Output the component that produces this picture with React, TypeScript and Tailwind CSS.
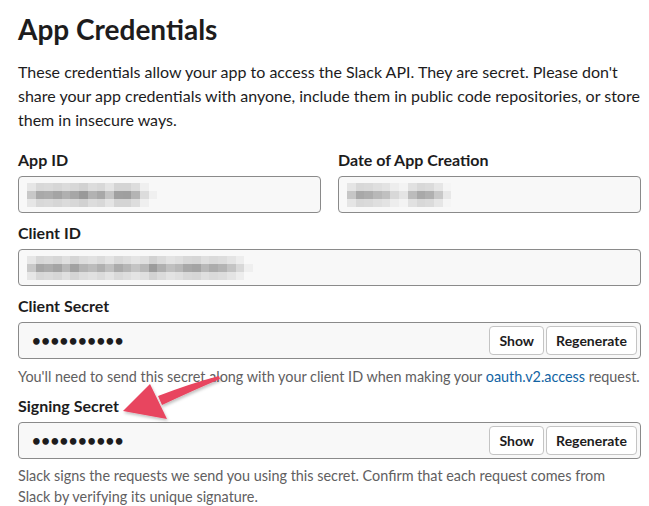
import React from 'react';

// pixelated (redacted) values: 3 rows of cells
const appIdMid = ['#c8c8c8', '#a9a9a9', '#acacac', '#a4a4a4', '#b0b0b0', '#a6a6a6', '#999', '#b2b2b2', '#a8a8a8', '#c4c4c4', '#a0a0a0', '#9f9f9f', '#b4b4b4', '#dcdcdc', '#f0f0f0'];
const dateMid = ['#c6c6c6', '#a8a8a8', '#adadad', '#b8b8b8', '#c0c0c0', '#d8d8d8', '#e4e4e4', '#bcbcbc', '#a9a9a9', '#b0b0b0', '#c8c8c8', '#e8e8e8'];
const clientMid = ['#c8c8c8', '#a6a6a6', '#acacac', '#a4a4a4', '#b8b8b8', '#a2a2a2', '#b4b4b4', '#bcbcbc', '#b0b0b0', '#c0c0c0', '#ababab', '#b6b6b6', '#c4c4c4', '#b8b8b8', '#9c9c9c', '#b0b0b0', '#c0c0c0', '#b8b8b8', '#a8a8a8', '#a4a4a4', '#b8b8b8', '#acacac', '#b4b4b4', '#c4c4c4', '#d8d8d8', '#efefef'];

function lighten(c: string) {
  // outer rows of the blur are much paler than the middle row
  const hex = c.replace('#', '');
  const full = hex.length === 3 ? hex.split('').map((h) => h + h).join('') : hex;
  const v = parseInt(full.slice(0, 2), 16);
  const l = Math.round(v + (255 - v) * 0.55);
  const h = l.toString(16).padStart(2, '0');
  return `#${h}${h}${h}`;
}

function Pixelated({ cells }: { cells: string[] }) {
  return (
    <div className="flex flex-col">
      {[0, 1, 2].map((row) => (
        <div key={row} className="flex">
          {cells.map((c, i) => (
            <div key={i} className="w-[8.7px] h-[8px]" style={{ background: row === 1 ? c : lighten(c) }} />
          ))}
        </div>
      ))}
    </div>
  );
}

function Label({ children, className = '' }: { children: React.ReactNode; className?: string }) {
  return <div className={`text-[16px] leading-[20px] font-bold text-[#1d1c1d] ${className}`}>{children}</div>;
}

function ReadOnlyBox({ cells }: { cells: string[] }) {
  return (
    <div className="mt-[6px] h-[37px] rounded-[4px] border border-[#8a8a8a] bg-[#f8f8f8] flex items-center pl-[8px]">
      <Pixelated cells={cells} />
    </div>
  );
}

function SecretBox() {
  return (
    <div className="mt-[6px] h-[37px] rounded-[4px] border border-[#8a8a8a] bg-[#f8f8f8] flex items-center justify-between pl-[13px] pr-[3px]">
      <span className="text-[15px] font-bold tracking-[0.5px] text-[#1d1c1d]">••••••••••</span>
      <div className="flex gap-[2px]">
        <button className="h-[29px] px-[9px] rounded-[4px] border border-[#c4c4c4] bg-white text-[14px] font-bold text-[#1d1c1d]">Show</button>
        <button className="h-[29px] px-[9px] rounded-[4px] border border-[#c4c4c4] bg-white text-[14px] font-bold text-[#1d1c1d]">Regenerate</button>
      </div>
    </div>
  );
}

export default function App() {
  return (
    <div className="relative w-[649px] h-[506px] bg-white overflow-hidden font-['Lato','Liberation_Sans',sans-serif] text-[#1d1c1d]">
      <div className="pl-[18px] pr-[8px] pt-[11px]">
        <h1 className="text-[28px] leading-[36px] font-bold">App Credentials</h1>
        <p className="mt-[13px] text-[16px] leading-[24px] w-[628px]">
          These credentials allow your app to access the Slack API. They are secret. Please don't share your app credentials with anyone, include them in public code repositories, or store them in insecure ways.
        </p>

        <div className="mt-[18px] grid grid-cols-2 gap-x-[17px]">
          <div>
            <Label>App ID</Label>
            <ReadOnlyBox cells={appIdMid} />
          </div>
          <div>
            <Label>Date of App Creation</Label>
            <ReadOnlyBox cells={dateMid} />
          </div>
        </div>

        <Label className="mt-[10px]">Client ID</Label>
        <ReadOnlyBox cells={clientMid} />

        <Label className="mt-[10px]">Client Secret</Label>
        <SecretBox />
        <p className="mt-[7px] text-[14.4px] leading-[21px] text-[#616061] whitespace-nowrap">
          You'll need to send this secret along with your client ID when making your <span className="text-[#1264a3]">oauth.v2.access</span> request.
        </p>

        <Label className="mt-[9px]">Signing Secret</Label>
        <SecretBox />
        <p className="mt-[6px] text-[14.4px] leading-[21px] text-[#616061] w-[600px]">
          Slack signs the requests we send you using this secret. Confirm that each request comes from Slack by verifying its unique signature.
        </p>
      </div>

      {/* annotation arrow */}
      <svg className="absolute left-0 top-0 pointer-events-none" width="649" height="506">
        <defs>
          <filter id="sh" x="-20%" y="-20%" width="140%" height="140%">
            <feDropShadow dx="1" dy="2" stdDeviation="1.5" floodColor="#000" floodOpacity="0.25" />
          </filter>
        </defs>
        <g fill="#e8445f" filter="url(#sh)">
          <path d="M219 376 Q192 383 158 396 L162 405 Q194 390 220 379 Z" />
          <path d="M123 411 L150 384 L167 419 Z" />
        </g>
      </svg>
    </div>
  );
}
